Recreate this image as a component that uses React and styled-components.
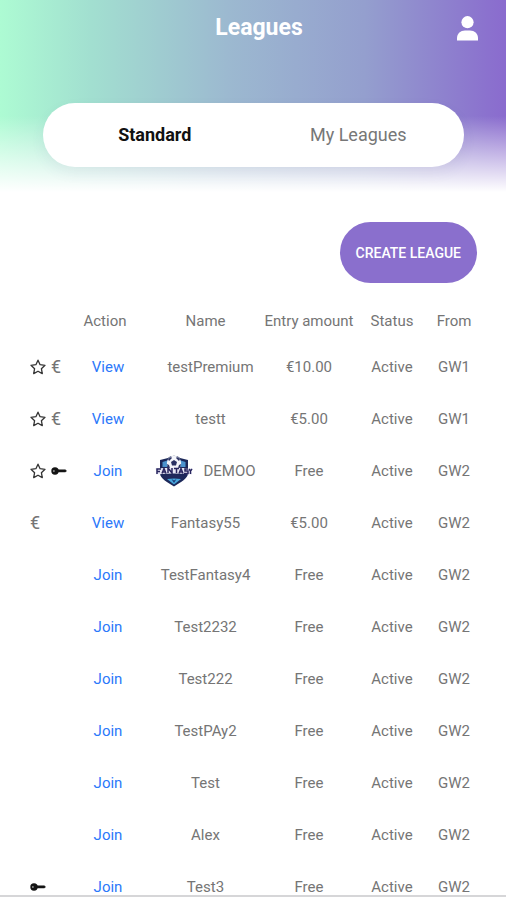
import React, { useState } from "react";
import styled, { createGlobalStyle } from "styled-components";

const GlobalStyle = createGlobalStyle`
  *, *::before, *::after { box-sizing: border-box; }
  body { margin: 0; background: #fff; font-family: Roboto, "Liberation Sans", sans-serif; }
`;

const Page = styled.div`
  display: flex;
  flex-direction: column;
  height: 100vh;
  background: #fff;
  color: #757575;
`;

const Header = styled.header`
  flex: none;
  padding-bottom: 25px;
  background:
    linear-gradient(to bottom, rgba(255, 255, 255, 0) 116px, #fff 192px),
    linear-gradient(to right, #adfbd3 0%, #a2dfd0 18%, #9cb9d0 45%, #949fce 72%, #8b72ce 96%, #8a6bce 100%);
`;

const TitleBar = styled.div`
  display: grid;
  grid-template-columns: 1fr auto 1fr;
  align-items: center;
  height: 56px;
  padding: 0 28px 0 40px;
`;

const Title = styled.h1`
  grid-column: 2;
  margin: 0;
  font-size: 23px;
  line-height: 32px;
  font-weight: 700;
  color: #fff;
`;

const ProfileButton = styled.button`
  justify-self: end;
  display: flex;
  padding: 0;
  border: 0;
  background: none;
  cursor: pointer;
`;

const Tabs = styled.div`
  display: grid;
  grid-template-columns: 1fr 1fr;
  height: 64px;
  margin: 47px 42px 0 43px;
  padding: 0 4px 0 10px;
  border-radius: 32px;
  background: #fff;
  box-shadow: 0 6px 14px rgba(90, 80, 140, 0.07);
`;

const Tab = styled.button`
  padding: 0;
  border: 0;
  background: none;
  font-family: inherit;
  font-size: 18px;
  line-height: 24px;
  font-weight: ${(p) => (p.$active ? 700 : 400)};
  color: ${(p) => (p.$active ? "#111" : "#777")};
  cursor: pointer;
`;

const Toolbar = styled.div`
  flex: none;
  display: flex;
  justify-content: flex-end;
  padding: 30px 29px 18px;
`;

const CreateButton = styled.button`
  height: 61px;
  padding: 0 16px;
  border: 0;
  border-radius: 31px;
  background: #8a6fcd;
  font-family: inherit;
  font-size: 14px;
  font-weight: 500;
  color: #fff;
  white-space: nowrap;
  cursor: pointer;
`;

const ListArea = styled.main`
  flex: 1;
  min-height: 0;
  padding: 0 26px 0 24px;
  overflow-y: auto;
  scrollbar-width: none;
`;

const Table = styled.table`
  width: 100%;
  table-layout: fixed;
  border-collapse: collapse;
  font-size: 15px;
  line-height: 20px;
  text-align: center;
  white-space: nowrap;
`;

const Column = styled.col`
  width: ${(p) => p.$width}px;
`;

const HeadCell = styled.th`
  height: 40px;
  padding: 0;
  font-weight: 400;
`;

const ActionHead = styled(HeadCell)`
  padding-right: 6px;
`;

const Cell = styled.td`
  height: 52px;
  padding: 0;
`;

const Marks = styled.div`
  display: flex;
  align-items: center;
  gap: 5px;
  padding-left: 6px;
`;

const EuroMark = styled.span`
  font-size: 18px;
`;

const ActionLink = styled.a`
  color: #2b78fa;
  text-decoration: none;
`;

const NameGroup = styled.div`
  display: flex;
  align-items: center;
  justify-content: center;
  gap: 10px;
`;

const LogoSlot = styled.span`
  display: flex;
`;

const BottomBar = styled.footer`
  flex: none;
  height: 5px;
  border-top: 2px solid #d6d6d8;
  background: #fff;
`;

const PersonIcon = () => (
  <svg width="21" height="25" viewBox="0 0 21 25" fill="#fff" aria-hidden="true">
    <circle cx="10.5" cy="6.2" r="6.1" />
    <path d="M0 24.5V22C0 17.500 3.600 14.500 8 14.500h5c4.400 0 8 3 8 7.500v2.500z" />
  </svg>
);

const StarIcon = () => (
  <svg width="16" height="16" viewBox="0 0 16 16" fill="none" stroke="#333" strokeWidth="1.3" strokeLinejoin="round" role="img" aria-label="Premium">
    <path d="M8 1.200l2.100 4.500 4.900.6-3.600 3.400.9 4.900L8 12.200l-4.300 2.400.9-4.900L1 6.300l4.900-.6z" />
  </svg>
);

const KeyIcon = () => (
  <svg width="16" height="10" viewBox="0 0 16 10" role="img" aria-label="Private">
    <circle cx="4" cy="5" r="3.700" fill="#151515" />
    <path d="M7 3.800h7.500l1 1.100-1 1.100H7z" fill="#151515" stroke="#151515" strokeWidth=".5" />
    <circle cx="2.900" cy="5" r=".9" fill="#999" />
  </svg>
);

const FantasyLogo = () => (
  <svg width="38" height="32" viewBox="0 0 38 32" role="img" aria-label="Fantasy">
    <path d="M5 5 13 3c3-3 9-3 12 0l8 2V18c0 6-8 9.500-14 13.500C13 27.500 5 24 5 18z" fill="#1c2859" />
    <path d="M7.500 7 14 5v7H7.500zM30.500 7 24 5v7h6.500z" fill="#4b93ce" />
    <circle cx="19" cy="8" r="7.200" fill="#f4f5fa" />
    <path d="m19 5 3 2-1 3.500h-4L16 7zM13 4l3-2 1 1-3 3zM25 4l-3-2-1 1 3 3zM12 9l2 1 1 3h-2zM26 9l-2 1-1 3h2z" fill="#2a3163" />
    <path d="M0 13.500q19-1.500 38 0l-2 3 1 3q-18-2-36 0l1-3z" fill="#e7e7f5" />
    <g fill="none" stroke="#29265f" strokeWidth="1.500">
      <path d="M2 19v-5h4M2 16.500h3M7 18.500l2-5 2 5M8 17h3M13 18v-5l4 5v-5M19 13.500h5M21.500 13.500V18M24 18.500l2-5 2 5M25 17h3M33 14h-3v2h3v2.500h-4M34 14l1.500 2L37 14M35.500 16v3" />
    </g>
    <path d="M8 20.500q11-1.500 22 0-1 2-3 3-8-1.500-16 0-2-1-3-3z" fill="#20295c" />
    <path d="M12 24q7-1 14 0l-7 5.500z" fill="#47a6dc" />
    <path d="m16.500 24 2.500 1.500 2.500-1.500L19 28z" fill="#1b3a78" />
  </svg>
);

const leagues = [
  { marks: ["star", "euro"], action: "View", name: "testPremium", entry: "€10.00", from: "GW1" },
  { marks: ["star", "euro"], action: "View", name: "testt", entry: "€5.00", from: "GW1" },
  { marks: ["star", "key"], action: "Join", name: "DEMOO", logo: true, entry: "Free", from: "GW2" },
  { marks: ["euro"], action: "View", name: "Fantasy55", entry: "€5.00", from: "GW2" },
  { marks: [], action: "Join", name: "TestFantasy4", entry: "Free", from: "GW2" },
  { marks: [], action: "Join", name: "Test2232", entry: "Free", from: "GW2" },
  { marks: [], action: "Join", name: "Test222", entry: "Free", from: "GW2" },
  { marks: [], action: "Join", name: "TestPAy2", entry: "Free", from: "GW2" },
  { marks: [], action: "Join", name: "Test", entry: "Free", from: "GW2" },
  { marks: [], action: "Join", name: "Alex", entry: "Free", from: "GW2" },
  { marks: ["key"], action: "Join", name: "Test3", entry: "Free", from: "GW2" },
];

const columnWidths = [43, 82, 113, 94, 72, 52];

const Mark = ({ kind }) => {
  if (kind === "star") return <StarIcon />;
  if (kind === "key") return <KeyIcon />;
  return <EuroMark>€</EuroMark>;
};

const LeagueRow = ({ league }) => (
  <tr>
    <Cell>
      <Marks>
        {league.marks.map((kind) => (
          <Mark key={kind} kind={kind} />
        ))}
      </Marks>
    </Cell>
    <Cell>
      <ActionLink href={`#${league.name}`}>{league.action}</ActionLink>
    </Cell>
    <Cell>
      <NameGroup>
        {/* Premium leagues reserve a slot for their own logo */}
        {league.marks.includes("star") && <LogoSlot>{league.logo && <FantasyLogo />}</LogoSlot>}
        <span>{league.name}</span>
      </NameGroup>
    </Cell>
    <Cell>{league.entry}</Cell>
    <Cell>Active</Cell>
    <Cell>{league.from}</Cell>
  </tr>
);

export default function App() {
  const [tab, setTab] = useState("Standard");
  return (
    <>
      <GlobalStyle />
      <Page>
        <Header>
          <TitleBar>
            <Title>Leagues</Title>
            <ProfileButton type="button" aria-label="Profile">
              <PersonIcon />
            </ProfileButton>
          </TitleBar>
          <Tabs role="tablist">
            {["Standard", "My Leagues"].map((label) => (
              <Tab
                key={label}
                type="button"
                role="tab"
                aria-selected={tab === label}
                $active={tab === label}
                onClick={() => setTab(label)}
              >
                {label}
              </Tab>
            ))}
          </Tabs>
        </Header>
        <Toolbar>
          <CreateButton type="button">CREATE LEAGUE</CreateButton>
        </Toolbar>
        <ListArea>
          <Table>
            <colgroup>
              {columnWidths.map((width, i) => (
                <Column key={i} $width={width} />
              ))}
            </colgroup>
            <thead>
              <tr>
                <HeadCell aria-label="Type" />
                <ActionHead scope="col">Action</ActionHead>
                <HeadCell scope="col">Name</HeadCell>
                <HeadCell scope="col">Entry amount</HeadCell>
                <HeadCell scope="col">Status</HeadCell>
                <HeadCell scope="col">From</HeadCell>
              </tr>
            </thead>
            <tbody>
              {leagues.map((league) => (
                <LeagueRow key={league.name} league={league} />
              ))}
            </tbody>
          </Table>
        </ListArea>
        <BottomBar />
      </Page>
    </>
  );
}
